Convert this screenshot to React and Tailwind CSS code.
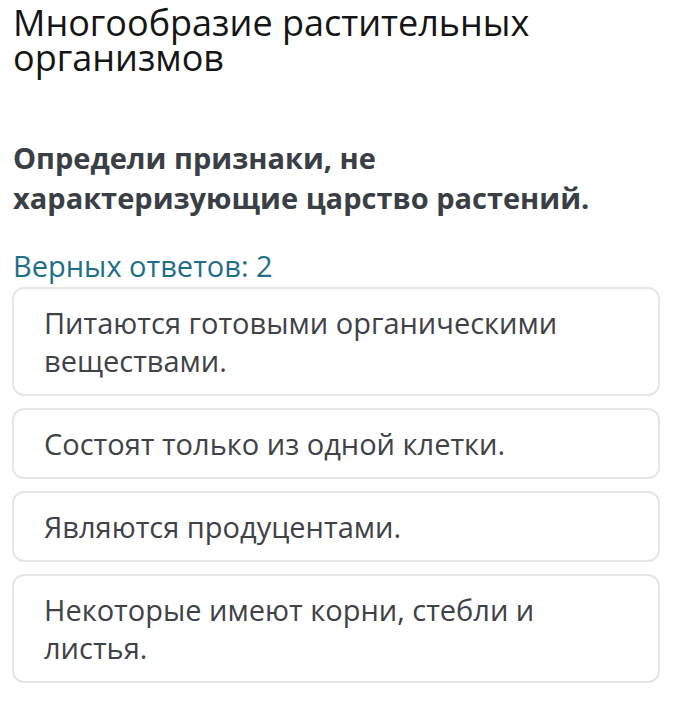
export default function App() {
  const answers = [
    "Питаются готовыми органическими веществами.",
    "Состоят только из одной клетки.",
    "Являются продуцентами.",
    "Некоторые имеют корни, стебли и листья.",
  ];
  return (
    <div className="w-[696px] h-[701px] bg-white overflow-hidden" style={{ fontFamily: '"Open Sans", sans-serif' }}>
      <div className="pl-[13px] pr-[36px]">
        <h1 className="text-[36px] leading-[35px] text-[#151515] font-normal pt-[5px]">
          Многообразие растительных организмов
        </h1>
        <h2 className="mt-[63px] text-[29px] leading-[40px] font-bold text-[#3a3e45] pr-[40px]">
          Определи признаки, не характеризующие царство растений.
        </h2>
        <div className="mt-[30px] text-[29px] leading-[36px] text-[#1f6f8b]">Верных ответов: 2</div>
      </div>
      <div className="pl-[12px] pr-[36px] flex flex-col gap-[12px] mt-[3px]">
        {answers.map((a, i) => (
          <div key={i} className="border-2 border-[#e6e6e6] rounded-[12px] pl-[30px] pr-[50px] pt-[15px] pb-[14px] text-[29px] leading-[38px] text-[#3f4247]">
            {a}
          </div>
        ))}
      </div>
    </div>
  );
}
